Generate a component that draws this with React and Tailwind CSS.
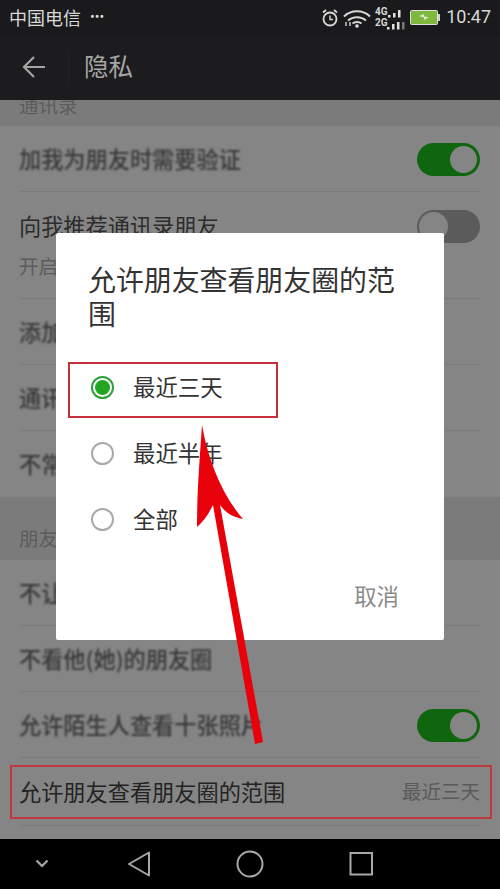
import React from "react";

const FONT = "font-['Noto_Sans_CJK_SC','Noto_Sans',sans-serif]";

function Switch({ on }) {
  return on ? (
    <div className="w-[63px] h-[33px] mt-[2px] rounded-full bg-[#0f660f] flex items-center justify-end pr-[3px] shrink-0">
      <div className="w-[27px] h-[27px] rounded-full bg-[#858585]" />
    </div>
  ) : (
    <div className="w-[63px] h-[33px] rounded-full bg-[#5b5b5b] flex items-center pl-[2px] shrink-0">
      <div className="w-[29px] h-[29px] rounded-full bg-[#858585]" />
    </div>
  );
}

function Row({ title, right, sharp, h = "h-[66px]", last }) {
  return (
    <div className={`${h} mx-[20px] flex items-center justify-between ${last ? "" : "border-b border-[#7a7a7a]"}`}>
      <span className={`-ml-px mb-[2px] text-[22.200px] leading-[30px] ${sharp ? "text-[#232323]" : "text-[#383838] blur-[1px] font-medium"}`}>{title}</span>
      {right}
    </div>
  );
}

function Radio({ on }) {
  return on ? (
    <div className="w-[23px] h-[23px] rounded-full border-2 border-[#2ea03a] flex items-center justify-center shrink-0">
      <div className="w-[15px] h-[15px] rounded-full bg-[#1fa51f]" />
    </div>
  ) : (
    <div className="w-[23px] h-[23px] rounded-full border-2 border-[#a9a9a9] shrink-0" />
  );
}

function Option({ on, label }) {
  return (
    <div className="h-[66px] flex items-center gap-[19px] pl-[35px]">
      <Radio on={on} />
      <span className="mb-[2px] text-[22.400px] leading-[30px] text-[#333333]">{label}</span>
    </div>
  );
}

function StatusIcons() {
  return (
    <svg width="100" height="30" viewBox="0 0 100 30" className="shrink-0">
      {/* alarm */}
      <g fill="none" stroke="#d8d8d8">
        <circle cx="20" cy="17" r="6.5" strokeWidth="1.8" />
        <path d="M20 13.5V17.5H23" strokeWidth="1.4" />
        <path d="M13 10.5l3-2.5M27 10.5l-3-2.5" strokeWidth="1.8" />
      </g>
      {/* wifi */}
      <g fill="none" stroke="#d8d8d8" strokeWidth="2">
        <path d="M34 14.5C41 7.500 53 7.500 60 14.500" />
        <path d="M38 18.500C43 14 51 14 56 18.500" />
        <path d="M42.500 21.500C45 19.500 49 19.500 51.500 21.500" />
      </g>
      <circle cx="47" cy="24" r="1.800" fill="#e0e0e0" />
      <path d="M36 24v-4M40 24v-4" stroke="#c8c8c8" strokeWidth="1.500" />
      {/* signal */}
      <text x="65" y="13" fill="#d8d8d8" fontSize="10" fontWeight="700" fontFamily="Roboto,sans-serif">4G</text>
      <text x="65" y="24" fill="#d8d8d8" fontSize="10" fontWeight="700" fontFamily="Roboto,sans-serif">2G</text>
      <g fill="#e0e0e0">
        <rect x="78" y="13" width="2.500" height="2.500" />
        <rect x="83" y="11" width="2.500" height="4.500" />
        <rect x="88" y="8" width="2.500" height="7.500" />
        <rect x="77" y="25" width="2.500" height="2.500" />
        <rect x="82" y="22" width="2.500" height="5.500" />
        <rect x="87" y="20" width="2.500" height="7.500" />
      </g>
      <rect x="92" y="20" width="2.500" height="7.500" fill="#777" />
    </svg>
  );
}

function Battery() {
  return (
    <div className="flex items-center shrink-0">
      <div className="w-[28px] h-[15px] bg-[#7fb83c] border border-[#e0e0e0] rounded-[1.500px] flex items-center justify-center">
        <svg width="12" height="8" viewBox="0 0 12 8">
          <path d="M1 3L6 1 6 3.500 11 4 6 7 6 4.500Z" fill="#dfe9d0" />
        </svg>
      </div>
      <div className="w-[2px] h-[7px] bg-[#d0d0d0]" />
    </div>
  );
}

export default function App() {
  return (
    <div className={`relative w-[500px] h-[889px] overflow-hidden flex flex-col bg-[#858585] ${FONT}`}>
      {/* status bar */}
      <div className="h-[34px] bg-[#1a1a1c] flex items-center pl-[9px] pr-[9px] shrink-0">
        <span className="text-[18px] leading-[24px] text-[#d8d8d8]">中国电信</span>
        <span className="ml-[9px] text-[14px] leading-[24px] text-[#d8d8d8] font-['Roboto',sans-serif]">•••</span>
        <div className="ml-auto flex items-center">
          <StatusIcons />
          <Battery />
          <span className="ml-[6px] text-[18px] leading-[24px] text-[#d8d8d8] font-['Roboto',sans-serif]">10:47</span>
        </div>
      </div>

      {/* header */}
      <div className="h-[66px] bg-[#1c1c1e] flex items-center shrink-0">
        <svg width="24" height="22" viewBox="0 0 24 22" className="ml-[22px]" fill="none" stroke="#a4a4a4" strokeWidth="2.200">
          <path d="M23 11H2M12 1L2 11L12 21" />
        </svg>
        <div className="ml-[22px] w-px h-[34px] bg-[#232325]" />
        <span className="ml-[15px] mb-[2px] text-[24.500px] leading-[32px] text-[#a6a6a6]">隐私</span>
      </div>

      {/* list */}
      <div className="flex-1 min-h-0 overflow-hidden flex flex-col">
        <div className="h-[26px] bg-[#7b7b7b] shrink-0 flex items-end pl-[19px] pb-[11px] overflow-hidden">
          <span className="text-[19.500px] leading-[20px] text-[#5c5c5c]">通讯录</span>
        </div>
        <Row title="加我为朋友时需要验证" right={<Switch on />} />
        <div className="h-[107px] mx-[20px] border-b border-[#7a7a7a] flex flex-col pt-[18px]">
          <div className="flex items-center justify-between h-[33px]">
            <span className="-ml-px mb-[3px] text-[22.200px] leading-[30px] text-[#2c2c2c]">向我推荐通讯录朋友</span>
            <Switch />
          </div>
          <span className="-ml-px mt-[10px] text-[19.500px] leading-[26px] text-[#5c5c5c]">开启后，为你推荐已经开通微信的手机联系人</span>
        </div>
        <Row title="添加我的方式" />
        <Row title="通讯录黑名单" />
        <Row title="不常联系的朋友" last />
        <div className="h-[63px] bg-[#7b7b7b] shrink-0 flex items-end pl-[19px] pb-[9px]">
          <span className="text-[19.500px] leading-[26px] text-[#5c5c5c]">朋友圈</span>
        </div>
        <Row title="不让他(她)看我的朋友圈" />
        <Row title="不看他(她)的朋友圈" />
        <Row title="允许陌生人查看十张照片" right={<Switch on />} />
        <Row
          title="允许朋友查看朋友圈的范围"
          sharp
          h="h-[68px]"
          right={<span className="mb-[2px] text-[19.500px] leading-[26px] text-[#5a5a5a]">最近三天</span>}
        />
      </div>

      {/* nav bar */}
      <div className="h-[50px] bg-black shrink-0">
        <svg width="500" height="50" viewBox="0 0 500 50" fill="none" stroke="#a8a8a8" strokeWidth="2">
          <path d="M36.500 21.500L42 27L47.500 21.500" strokeWidth="2.200" />
          <path d="M149 13.500V36.500L129 25Z" strokeLinejoin="round" />
          <circle cx="250" cy="25" r="12.500" />
          <rect x="350.500" y="14" width="21.500" height="21.500" />
        </svg>
      </div>

      {/* dialog */}
      <div className="absolute left-[56px] top-[233px] w-[388px] h-[407px] bg-white rounded-[2px] flex flex-col">
        <div className="pt-[29px] pl-[32px] pr-[33px] text-[27.900px] leading-[34px] text-[#333333]">
          允许朋友查看朋友圈的范围
        </div>
        <div className="mt-[24px] flex flex-col">
          <Option on label="最近三天" />
          <Option label="最近半年" />
          <Option label="全部" />
        </div>
        <div className="mt-auto pb-[30px] pr-[45px] flex justify-end">
          <span className="text-[22.400px] leading-[30px] text-[#8a8a8a]">取消</span>
        </div>
      </div>

      {/* annotations */}
      <div className="absolute left-[68px] top-[362px] w-[210px] h-[56px] border-2 border-[#c7323a]" />
      <div className="absolute left-[10px] top-[765px] w-[482px] h-[54px] border-2 border-[#c4393f]" />
      <svg className="absolute left-0 top-0 pointer-events-none" width="500" height="889" viewBox="0 0 500 889">
        <path
          d="M202 425C208 460 222 495 243 519C232 517 225 512 220 505L263 742L255 744L213 505C208 515 203 522 197 527C197 490 200 455 202 425Z"
          fill="#e8000b"
        />
      </svg>
    </div>
  );
}
